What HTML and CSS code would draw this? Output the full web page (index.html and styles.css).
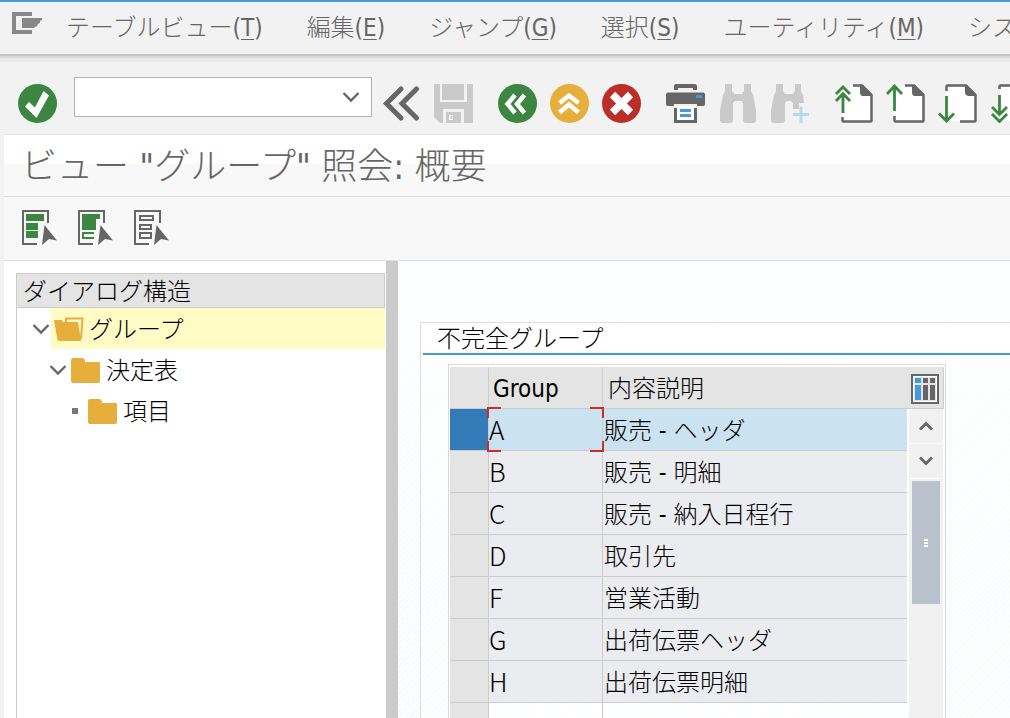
FILE: index.html
```html
<!DOCTYPE html>
<html lang="ja">
<head>
<meta charset="utf-8">
<title>ビュー "グループ" 照会: 概要</title>
<link rel="stylesheet" href="styles.css">
</head>
<body>
<nav class="menubar">
  <button class="menu-icon" aria-label="メニュー">
    <svg width="30" height="22" viewBox="0 0 30 22"><path d="M20 0H0v22h20v-4H4V4h16zM10 6h20v2l-2 1v2l-2 1-1 2-2 1-1 1H10z" fill="#888"/></svg>
  </button>
  <button class="menu-item">テーブルビュー(<u>T</u>)</button>
  <button class="menu-item">編集(<u>E</u>)</button>
  <button class="menu-item">ジャンプ(<u>G</u>)</button>
  <button class="menu-item">選択(<u>S</u>)</button>
  <button class="menu-item">ユーティリティ(<u>M</u>)</button>
  <button class="menu-item">システム</button>
</nav>

<div class="toolbar">
  <button class="tool" aria-label="実行">
    <svg viewBox="0 0 39 39"><circle cx="19.500" cy="19.500" r="19.500" fill="#3d8642"/><path d="M7 22.500l4-4.500 6 5.500L25.500 7l5.500 4.500L18.500 34z" fill="#fff"/></svg>
  </button>
  <div class="command">
    <input class="command-input" type="text" aria-label="コマンド">
    <button class="command-open" aria-label="履歴">
      <svg width="18" height="12" viewBox="0 0 18 12"><path d="M1.500 2L9 9.500 16.500 2" fill="none" stroke="#666" stroke-width="2.400"/></svg>
    </button>
  </div>
  <div class="tool-group">
    <button class="tool" aria-label="折りたたみ">
      <svg viewBox="0 0 39 39"><path d="M19 5L4.500 19.500 19 34M34.500 5L20 19.500l14.500 14.500" fill="none" stroke="#666" stroke-width="5" stroke-linecap="round"/></svg>
    </button>
    <button class="tool" aria-label="保存">
      <svg viewBox="0 0 39 39"><path d="M0 1q0-1 1-1h5v18h27V0h5q1 0 1 1v38h-9V27H9v12H6l-6-6zM8 0h22v16H8zM12 28h15v11H12z" fill="#cacaca"/><path d="M6 0h2v16h22V0h3v18H6zM9 25h21v14h-3V28H12v11H9z" fill="#f2f2f2"/><path d="M0 18h39v7H0z" fill="#cacaca"/><path d="M15 31h4v5h-4z" fill="#fff"/><path d="M16.500 32h2v3h-2z" fill="#cacaca"/></svg>
    </button>
  </div>
  <div class="tool-group">
    <button class="tool" aria-label="戻る">
      <svg viewBox="0 0 39 39"><circle cx="19.500" cy="19.500" r="19.500" fill="#3d8642"/><path d="M17 11l-7.500 9 7.500 9M26.500 11L19 20l7.500 9" fill="none" stroke="#fff" stroke-width="4.500"/></svg>
    </button>
    <button class="tool" aria-label="終了">
      <svg viewBox="0 0 39 39"><circle cx="19.500" cy="19.500" r="19.500" fill="#e6ae3b"/><path d="M9.500 19l9.500-7.500 9.500 7.500M9.500 28.500L19 20.500l9.500 8" fill="none" stroke="#fff" stroke-width="4.500"/></svg>
    </button>
    <button class="tool" aria-label="取消">
      <svg viewBox="0 0 39 39"><circle cx="19.500" cy="19.500" r="19.500" fill="#bc2f29"/><path d="M10.500 10.500l18 18M28.500 10.500l-18 18" stroke="#fff" stroke-width="7.500"/></svg>
    </button>
  </div>
  <div class="tool-group">
    <button class="tool" aria-label="印刷">
      <svg viewBox="0 0 39 39"><path d="M8 6V2q0-2 2-2h19q2 0 2 2v4h-4V4H12v2zM2 8.500h35q2 0 2 2V20q0 2-2 2h-6v-2H8v2H2q-2 0-2-2v-9.500q0-2 2-2zM8 24h3v12h17V24h3v15H8z" fill="#666"/><path d="M11 22h17v14H11z" fill="#fff"/><path d="M30 11h6v3h-6zM14 25h11v3H14zM14 30h11v3H14z" fill="#439bdc"/></svg>
    </button>
    <button class="tool" aria-label="検索">
      <svg viewBox="0 0 39 39"><path d="M7 0h7v7l2 2v1h8V9l2-2V0h7v7l2 4 3 15v10q0 3-3 3h-7q-3 0-3-3V19l-2-2h-6l-2 2v17q0 3-3 3H5q-3 0-3-3V26L5 11l2-4z" fill="#cacaca"/></svg>
    </button>
    <button class="tool" aria-label="次検索">
      <svg viewBox="0 0 39 39"><path d="M6 0h7v7l2 3h8l2-3V0h6v7l2 4 1 8h-5v6h-6v-6l-2-2h-4l-2 2v17q0 3-3 3H4q-3 0-3-3V26L4 11l2-4z" fill="#cacaca"/><path d="M31 22.500V39M23 30.500h16" stroke="#b5dbee" stroke-width="3"/></svg>
    </button>
  </div>
  <div class="tool-group">
    <button class="tool" aria-label="先頭ページ">
      <svg viewBox="0 0 39 39"><path d="M18 1h9l10 10v26H8V8z" fill="#fff"/><path d="M19 1.500h9L37.500 11v25.500q0 1-1 1h-27q-1 0-1-1V33" fill="none" stroke="#666" stroke-width="2.500"/><path d="M26 1h3l9 9v2H28q-2-1-2-3z" fill="#666"/><path d="M9 29V10M2 17l7-7.500 7 7.500M2 10l7-7 7 7" fill="none" stroke="#3d8642" stroke-width="2.800"/></svg>
    </button>
    <button class="tool" aria-label="前ページ">
      <svg viewBox="0 0 39 39"><path d="M18 1h9l10 10v26H8V8z" fill="#fff"/><path d="M19 1.500h9L37.500 11v25.500q0 1-1 1h-27q-1 0-1-1V32" fill="none" stroke="#666" stroke-width="2.500"/><path d="M26 1h3l9 9v2H28q-2-1-2-3z" fill="#666"/><path d="M8.500 27V3M1 10l7.500-8L16 10" fill="none" stroke="#3d8642" stroke-width="2.800"/></svg>
    </button>
    <button class="tool" aria-label="次ページ">
      <svg viewBox="0 0 39 39"><path d="M8 2h20l9 9v26H8z" fill="#fff"/><path d="M8.500 7V2.500q0-1 1-1H28l9.500 9.500v25.500q0 1-1 1H22" fill="none" stroke="#666" stroke-width="2.500"/><path d="M27 1h2l9 9v2H30q-3-1-3-3z" fill="#666"/><path d="M8.500 12v25M1 29.500L8.500 37l7.500-7.500" fill="none" stroke="#3d8642" stroke-width="2.800"/></svg>
    </button>
    <button class="tool" aria-label="最終ページ">
      <svg viewBox="0 0 39 39"><path d="M10 2h18l9 9v26H10z" fill="#fff"/><path d="M9.500 5V2.500q0-1 1-1H28l9.500 9.500v25.500q0 1-1 1H22" fill="none" stroke="#666" stroke-width="2.500"/><path d="M9.500 11v19M2 23l7.500 7.500L17 23M2 30l7.500 7.500L17 30" fill="none" stroke="#3d8642" stroke-width="2.800"/></svg>
    </button>
  </div>
</div>

<div class="window">
  <h1 class="title">ビュー "グループ" 照会: 概要</h1>
  <div class="appbar">
    <button class="app-tool" aria-label="全選択">
      <svg viewBox="0 0 36 36"><path d="M15 34H1V1h25v12" fill="none" stroke="#666" stroke-width="2"/><path d="M4 4h18v7H4zM4 13h12v7H4zM4 21h12v7H4z" fill="#3d8642"/><path d="M22.500 15L35 30.500l-8-1.500-7 6z" fill="#666"/></svg>
    </button>
    <button class="app-tool" aria-label="ブロック選択">
      <svg viewBox="0 0 36 36"><path d="M15 34H1V1h25v12" fill="none" stroke="#666" stroke-width="2"/><path d="M4 4h18v5h-4v11H4z" fill="#3d8642"/><path d="M16 23H5v5h11" fill="none" stroke="#3d8642" stroke-width="2"/><path d="M22.500 15L35 30.500l-8-1.500-7 6z" fill="#666"/></svg>
    </button>
    <button class="app-tool" aria-label="全選択解除">
      <svg viewBox="0 0 36 36"><path d="M15 34H1V1h25v12" fill="none" stroke="#666" stroke-width="2"/><path d="M6 6h13v4H6zM6 15h11v4H6zM6 23h11v5H6z" fill="none" stroke="#666" stroke-width="2"/><path d="M22.500 15L35 30.500l-8-1.500-7 6z" fill="#666"/></svg>
    </button>
  </div>

  <main class="content">
    <aside class="side">
      <div class="tree">
        <h2 class="tree-title">ダイアログ構造</h2>
        <div class="node">
          <svg class="twist" viewBox="0 0 18 12"><path d="M1.500 2L9 9.500 16.500 2" fill="none" stroke="#666" stroke-width="2.400"/></svg>
          <button class="node-label active">
            <svg class="folder" viewBox="0 0 30 25"><path d="M12 5V1.500h16.500L27 22" fill="none" stroke="#e6ae3b" stroke-width="2"/><path d="M0 3h8l1 2h15l3 18.500q0 .500-1 .500H5Q4 24 3.500 23z" fill="#e6ae3b"/></svg>
            グループ
          </button>
        </div>
        <div class="node level-2">
          <svg class="twist" viewBox="0 0 18 12"><path d="M1.500 2L9 9.500 16.500 2" fill="none" stroke="#666" stroke-width="2.400"/></svg>
          <button class="node-label">
            <svg class="folder" viewBox="0 0 30 25"><path d="M0 2q0-2 2-2h9q3 0 3 4h14q1 0 1 1v18q0 2-2 2H2q-2 0-2-2z" fill="#e6ae3b"/></svg>
            決定表
          </button>
        </div>
        <div class="node level-3">
          <svg class="twist" viewBox="0 0 18 12"><path d="M6 3h6v6H6z" fill="#777"/></svg>
          <button class="node-label">
            <svg class="folder" viewBox="0 0 30 25"><path d="M0 2q0-2 2-2h9q3 0 3 4h14q1 0 1 1v18q0 2-2 2H2q-2 0-2-2z" fill="#e6ae3b"/></svg>
            項目
          </button>
        </div>
      </div>
    </aside>
    <div class="splitter"></div>
    <section class="detail">
      <div class="panel">
        <h2 class="panel-title">不完全グループ</h2>
        <div class="grid">
          <table class="table">
            <colgroup><col class="col-mark"><col class="col-group"><col></colgroup>
            <thead><tr><th></th><th>Group</th><th>内容説明</th></tr></thead>
            <tbody>
              <tr class="selected"><td></td><td class="code focus">A</td><td>販売 - ヘッダ</td></tr>
              <tr><td></td><td class="code">B</td><td>販売 - 明細</td></tr>
              <tr><td></td><td class="code">C</td><td>販売 - 納入日程行</td></tr>
              <tr><td></td><td class="code">D</td><td>取引先</td></tr>
              <tr><td></td><td class="code">F</td><td>営業活動</td></tr>
              <tr><td></td><td class="code">G</td><td>出荷伝票ヘッダ</td></tr>
              <tr><td></td><td class="code">H</td><td>出荷伝票明細</td></tr>
              <tr class="empty"><td></td><td></td><td></td></tr>
            </tbody>
          </table>
          <div class="rail">
            <button class="config" aria-label="テーブル設定">
              <svg width="28" height="30" viewBox="0 0 28 30"><path d="M1 1h26v28H1z" fill="#fff" stroke="#666" stroke-width="2"/><path d="M3 3h22v24H3z" fill="#e4e4e4"/><path d="M4 4h6v5H4zM4 11h6v15H4z" fill="#439bdc"/><path d="M12 4h5v5h-5zM12 11h5v15h-5zM19 4h5v5h-5zM19 11h5v15h-5z" fill="#666"/></svg>
            </button>
            <div class="scroll">
              <button class="scroll-step" aria-label="上へ"><svg width="16" height="10" viewBox="0 0 16 10"><path d="M2 8.500l6-6 6 6" fill="none" stroke="#666" stroke-width="2.800"/></svg></button>
              <button class="scroll-step" aria-label="下へ"><svg width="16" height="10" viewBox="0 0 16 10"><path d="M2 1.500l6 6 6-6" fill="none" stroke="#666" stroke-width="2.800"/></svg></button>
              <div class="thumb"><svg width="4" height="8" viewBox="0 0 4 8"><path d="M0 0h4v2H0zM0 3h4v2H0zM0 6h4v2H0z" fill="#fff"/></svg></div>
            </div>
          </div>
        </div>
      </div>
    </section>
  </main>
</div>
</body>
</html>
```
FILE: styles.css
```css
* { box-sizing: border-box; }

body {
  margin: 0;
  height: 100vh;
  overflow: hidden;
  display: flex;
  flex-direction: column;
  background: #f2f2f2;
  color: #000;
  font: 300 24px/32px "DejaVu Sans Condensed", "Noto Sans CJK JP", sans-serif;
}

h1, h2 { margin: 0; font-weight: 300; white-space: nowrap; }

button {
  margin: 0;
  padding: 0;
  border: 0;
  background: none;
  color: inherit;
  font: inherit;
  white-space: nowrap;
}

svg { display: block; flex: none; }

.menubar {
  flex: none;
  display: flex;
  align-items: center;
  height: 56px;
  padding-left: 12px;
  overflow: hidden;
  border-top: 2px solid #439bdc;
  border-bottom: 2px solid #c4c4c4;
  color: #666;
}
.menu-icon { margin: 0 2px 10px 0; }
.menu-item { padding: 0 22px; }
.menu-item u { text-decoration-thickness: 1px; text-underline-offset: 3px; }

.toolbar {
  flex: none;
  display: flex;
  align-items: center;
  height: 78px;
  padding: 17px 0 0 18px;
  overflow: hidden;
  background: linear-gradient(#dadada 2px, #e8e8e8 2px, #e8e8e8 6px, #f2f2f2 6px);
}
.tool-group { display: flex; gap: 13px; margin-right: 25px; }
.tool { flex: none; width: 39px; height: 39px; }
.command {
  flex: none;
  display: flex;
  width: 298px;
  height: 40px;
  margin: 0 10px 13px 17px;
  border: 1px solid #b4b4b4;
  background: #fff;
}
.command-input {
  flex: 1;
  min-width: 0;
  border: 0;
  padding: 0 8px;
  background: none;
  font: inherit;
}
.command-open { width: 40px; display: grid; place-items: center; }

.window {
  flex: 1;
  min-height: 0;
  display: flex;
  flex-direction: column;
  margin-left: 4px;
  border-top: 1px solid #e4e4e4;
  background: #fff;
}
.title {
  flex: none;
  height: 62px;
  padding-left: 17px;
  border-bottom: 1px solid #dedede;
  background: linear-gradient(#fff 29px, #f8f8f8 29px);
  color: #666;
  font-size: 36px;
  line-height: 64px;
}
.appbar {
  flex: none;
  display: flex;
  align-items: center;
  gap: 20px;
  height: 64px;
  padding: 0 18px 2px;
  border-bottom: 1px solid #dedede;
  background: #f8f8f8;
}
.app-tool { width: 36px; height: 36px; }

.content { flex: 1; min-height: 0; display: flex; overflow: hidden; }
.side { flex: none; display: flex; width: 382px; padding: 12px 0 0 12px; }
.tree { flex: 1; border-left: 1px solid #ccc; margin-right: 1px; }
.tree-title {
  height: 35px;
  padding-left: 6px;
  border: solid #ccc;
  border-width: 1px 1px 1px 0;
  background: #e4e4e4;
  font-size: 24px;
  line-height: 36px;
}
.node { display: flex; align-items: center; height: 41px; padding-left: 15px; }
.level-2 { padding-left: 32px; }
.level-3 { padding-left: 49px; }
.twist { width: 18px; height: 12px; }
.node-label {
  flex: 1;
  display: flex;
  align-items: center;
  gap: 5px;
  height: 41px;
  margin-left: 1px;
  padding: 2px 0 0 3px;
}
.active { background: #fffbc4; }
.folder { width: 30px; height: 25px; }
.splitter { flex: none; width: 12px; background: #cbcbcb; }

.detail {
  flex: 1;
  min-width: 0;
  display: flex;
  padding: 61px 0 0 22px;
  background:
    linear-gradient(#fdfeff, rgba(253, 254, 255, 0.4)),
    repeating-linear-gradient(135deg, #fff 0 2px, #f0f7fc 2px 4px);
}
.panel {
  flex: 1;
  min-width: 0;
  border: solid #dedede;
  border-width: 1px 0 0 1px;
  padding-left: 2px;
  background: rgba(255, 255, 255, 0.4);
}
.panel-title {
  height: 32px;
  padding-left: 14px;
  border-bottom: 2px solid #439bdc;
  background: #fff;
  font-size: 24px;
  line-height: 32px;
}
.grid {
  display: flex;
  width: 498px;
  height: 100%;
  margin: 9px 0 0 25px;
  padding: 2px 1px 0 1px;
  border: 1px solid #dadada;
}
.table {
  flex: 1;
  height: 0;
  border-collapse: separate;
  border-spacing: 0;
  table-layout: fixed;
}
.col-mark { width: 39px; }
.col-group { width: 114px; }
th, td {
  height: 42px;
  padding: 2px 0 0 1px;
  border-right: 1px solid #ccc;
  border-bottom: 1px solid #ccc;
  background: #ebecf0;
  text-align: left;
  font-weight: 300;
  white-space: nowrap;
}
th { padding-left: 4px; background: #e4e4e4; }
th:last-child { padding-left: 5px; }
th:last-child, td:last-child { border-right: 0; }
td:first-child { background: #e4e4e4; }
.selected td { background: #cbe2f0; }
.selected td:first-child { background: #337ab9; }
.empty td { background: rgba(255, 255, 255, 0.5); }
.empty td:first-child { background: #e4e4e4; }
.code { padding: 0 0 2px; font-family: "Noto Sans CJK JP", sans-serif; font-size: 26px; }

/* red corner brackets around the focused cell */
.focus { position: relative; }
.focus::before, .focus::after {
  content: "";
  position: absolute;
  top: -2px;
  bottom: -2px;
  width: 12px;
  background:
    linear-gradient(#d22d22, #d22d22) top / 100% 2px no-repeat,
    linear-gradient(#d22d22, #d22d22) bottom / 100% 2px no-repeat;
  border: 0 solid transparent;
}
.focus::before {
  left: -2px;
  border-left: 2px solid;
  border-image: linear-gradient(#d22d22 12px, transparent 12px calc(100% - 12px), #d22d22 calc(100% - 12px)) 2;
}
.focus::after {
  right: -2px;
  border-right: 2px solid;
  border-image: linear-gradient(#d22d22 12px, transparent 12px calc(100% - 12px), #d22d22 calc(100% - 12px)) 2;
}

.rail { flex: none; display: flex; flex-direction: column; width: 37px; }
.config {
  flex: none;
  display: grid;
  place-items: center;
  height: 42px;
  padding-top: 2px;
  border: solid #ccc;
  border-width: 0 1px 1px 0;
  background: #e4e4e4;
}
.scroll { flex: 1; margin: 0 1px 0 2px; background: #f1f1f1; }
.scroll-step {
  display: grid;
  place-items: center;
  width: 100%;
  height: 35px;
  border-bottom: 1px solid #fff;
}
.thumb {
  display: grid;
  place-items: center;
  height: 123px;
  margin: 2px 3px 0;
  background: #b9c1cc;
}
```
